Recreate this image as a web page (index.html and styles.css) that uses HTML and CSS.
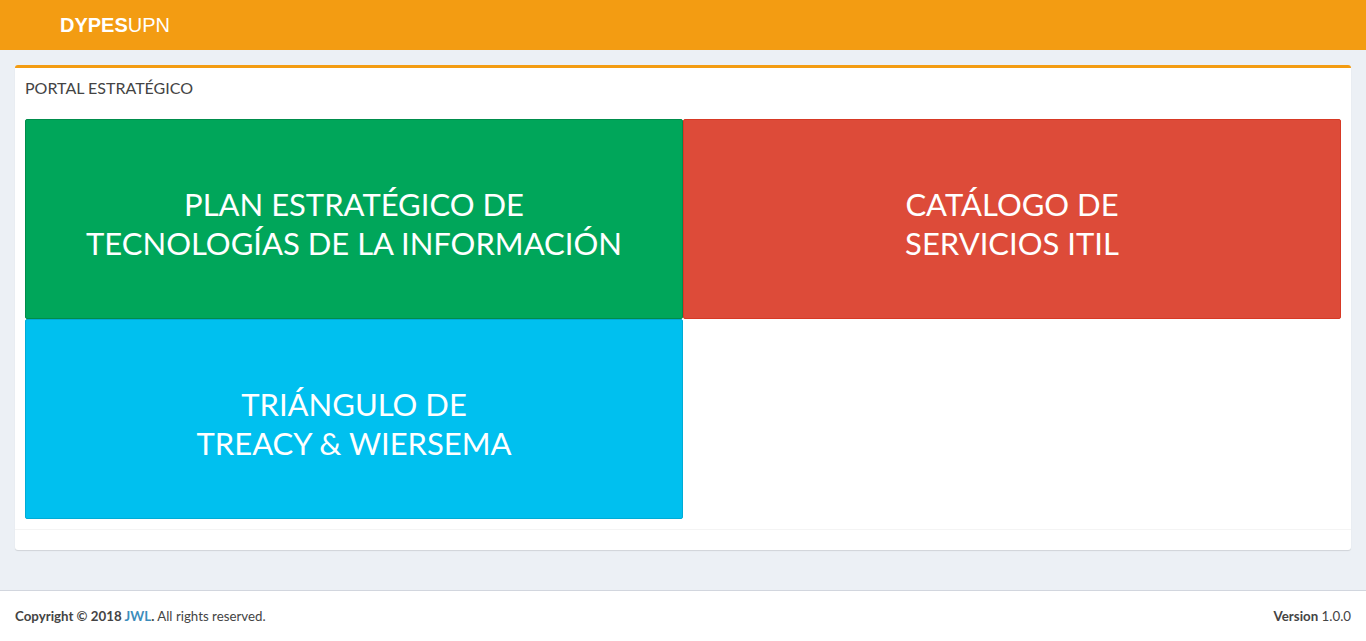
FILE: index.html
```html
<!DOCTYPE html>
<html lang="es">
<head>
<meta charset="utf-8">
<title>DYPESUPN</title>
<link rel="stylesheet" href="styles.css">
</head>
<body>
<header class="topbar">
  <a class="logo"><b>DYPES</b>UPN</a>
</header>
<main class="content">
  <section class="box">
    <div class="box-header"><h3 class="box-title">PORTAL ESTRATÉGICO</h3></div>
    <div class="box-body">
      <div class="tiles">
        <a class="tile tile-green">PLAN ESTRATÉGICO DE<br>TECNOLOGÍAS DE LA INFORMACIÓN</a>
        <a class="tile tile-red">CATÁLOGO DE<br>SERVICIOS ITIL</a>
        <a class="tile tile-blue">TRIÁNGULO DE<br>TREACY &amp; WIERSEMA</a>
      </div>
    </div>
    <div class="box-footer"></div>
  </section>
</main>
<footer class="main-footer">
  <div><strong>Copyright © 2018 <a class="link">JWL</a>.</strong> All rights reserved.</div>
  <div><b>Version</b> 1.0.0</div>
</footer>
</body>
</html>
```
FILE: styles.css
```css
html, body { margin: 0; padding: 0; }
body {
  background: #ecf0f5;
  font-family: "Lato", "Open Sans", sans-serif;
  color: #333;
  min-height: 641px;
  display: flex;
  flex-direction: column;
}
.topbar {
  height: 50px;
  background: #f39c12;
  display: flex;
  align-items: center;
  padding-left: 60px;
}
.logo {
  font-family: "Liberation Sans", Arial, sans-serif;
  font-size: 20px;
  color: #fff;
  line-height: 50px;
}
.logo b { font-weight: 700; }
.content {
  padding: 15px 15px 20px;
  flex: 1;
}
.box {
  background: #fff;
  border-top: 3px solid #f39c12;
  border-radius: 3px;
  box-shadow: 0 1px 1px rgba(0,0,0,0.12);
  margin-bottom: 20px;
}
.box-header {
  padding: 9px 10px 14px;
  height: 18px;
}
.box-title {
  margin: 0;
  font-size: 16px;
  font-weight: 400;
  line-height: 22px;
  color: #444;
}
.box-body { padding: 10px; }
.tiles {
  display: grid;
  grid-template-columns: 1fr 1fr;
  grid-auto-rows: 200px;
}
.tile {
  display: flex;
  align-items: center;
  justify-content: center;
  text-align: center;
  color: #fff;
  font-size: 31px;
  line-height: 39px;
  border: 1px solid;
  border-radius: 2px;
  padding-top: 10px;
  box-sizing: border-box;
}
.tile-green { background: #00a65a; border-color: #008d4c; }
.tile-red { background: #dd4b39; border-color: #d73925; }
.tile-blue { background: #00c0ef; border-color: #00acd6; }
.box-footer {
  border-top: 1px solid #f4f4f4;
  height: 20px;
}
.main-footer {
  background: #fff;
  border-top: 1px solid #d2d6de;
  padding: 15px;
  display: flex;
  justify-content: space-between;
  font-size: 13.3px;
  line-height: 20px;
  color: #444;
}
.link { color: #3c8dbc; }
```
